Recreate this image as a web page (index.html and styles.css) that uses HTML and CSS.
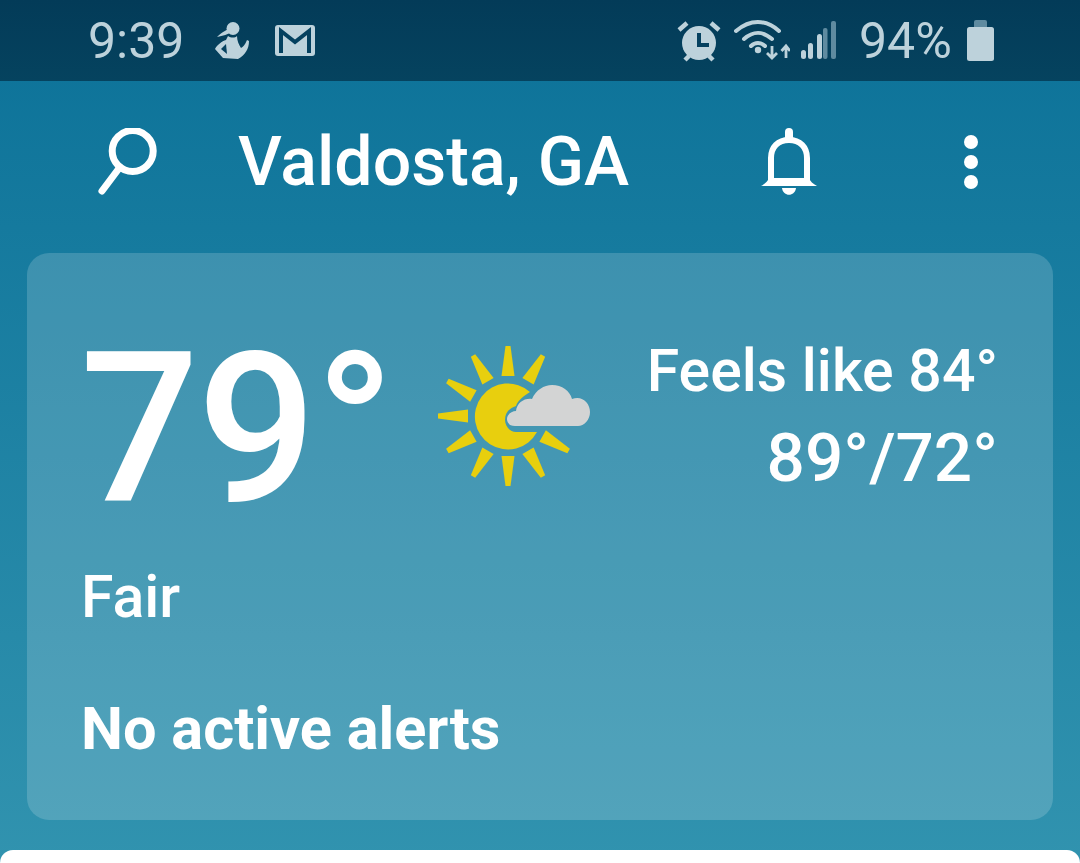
FILE: index.html
```html
<!DOCTYPE html>
<html lang="en">
<head>
<meta charset="utf-8">
<title>Valdosta, GA</title>
<link rel="stylesheet" href="styles.css">
</head>
<body>
<div class="status">
  <div class="status-left">
    <span class="clock">9:39</span>
    <svg class="i-person" viewBox="0 0 36 42"><circle cx="19" cy="8.500" r="6.500"/><path d="M17 8 C12 10 8 12 3 17 C9 16 14 14 18 12Z"/><path d="M14 16 C17 18 21 18 23 16 C23 21 25 25 27 28 C29 27 31 25 33 20 L35 21 C35 29 31 35 24 39 L9 38 L1 29 C3 25 8 21 12 20Z"/><path class="cut" d="M12 24 L7 29 L13 34 Z"/></svg>
    <svg class="i-mail" viewBox="0 0 40 31"><rect width="40" height="31" rx="3"/><path class="cut-stroke" d="M6 28 V6 L20 17 L34 6 V28"/></svg>
  </div>
  <div class="status-right">
    <svg class="i-alarm" viewBox="0 0 44 44"><path class="bar" d="M2 11 L10 4 M42 11 L34 4 M8 41 L12 37 M36 41 L32 37"/><circle cx="22" cy="24" r="17"/><path class="cut-stroke" d="M22 14 V26 H32"/></svg>
    <svg class="i-wifi" viewBox="0 0 56 44"><path class="arc" d="M2 12 C16 0 32 0 45 12 M10 20 C19 12 29 12 38 20 M17 27 C21 23 27 23 31 27"/><circle cx="24" cy="31" r="3.200"/><path class="arrow" d="M38 27 V39 M33 34 L38 39 L43 34 M52 39 V27 M47.500 32 L52 27 L56 32"/></svg>
    <svg class="i-signal" viewBox="0 0 36 44"><rect x="1" y="31" width="5" height="9" rx="2.500"/><rect x="8" y="24" width="5" height="16" rx="2.500"/><rect x="17" y="15" width="5" height="25" rx="2.500"/><rect class="dim" x="23" y="9" width="4.500" height="31" rx="2"/><rect class="dim" x="31" y="2" width="5" height="38" rx="2"/></svg>
    <span class="battery-text">94%</span>
    <svg class="i-battery" viewBox="0 0 27 41"><rect class="dim" x="7" y="0" width="13" height="9" rx="2"/><rect y="7" width="27" height="34" rx="2.500"/></svg>
  </div>
</div>

<header class="topbar">
  <svg class="i-search" viewBox="0 0 62 68"><circle cx="36.700" cy="23" r="20.500"/><path d="M24 39 L6 63"/></svg>
  <h1 class="city">Valdosta, GA</h1>
  <svg class="i-bell" viewBox="0 0 56 68"><path class="bell-line" d="M10 54 V30 C10 19 17 12 28 12 C39 12 46 19 46 30 V54"/><path class="bell-fill" d="M0 58 C4 56 7 53 8 50 H48 C49 53 52 56 56 58Z"/><rect class="bell-fill" x="24" y="0" width="8" height="14" rx="4"/><path class="bell-fill" d="M21 60 H35 C34 69 22 69 21 60Z"/></svg>
  <div class="kebab"><span></span><span></span><span></span></div>
</header>

<section class="card">
  <div class="now">
    <div class="temp">79°</div>
    <svg class="i-sun" viewBox="0 0 160 150">
      <g class="rays" transform="translate(72 76)">
        <path d="M-6.500 -40 L-2.500 -70 H2.500 L6.500 -40Z"/>
        <path d="M-6.500 -40 L-2.500 -70 H2.500 L6.500 -40Z" transform="rotate(30)"/>
        <path d="M-6.500 -40 L-2.500 -70 H2.500 L6.500 -40Z" transform="rotate(120)"/>
        <path d="M-6.500 -40 L-2.500 -70 H2.500 L6.500 -40Z" transform="rotate(150)"/>
        <path d="M-6.500 -40 L-2.500 -70 H2.500 L6.500 -40Z" transform="rotate(180)"/>
        <path d="M-6.500 -40 L-2.500 -70 H2.500 L6.500 -40Z" transform="rotate(210)"/>
        <path d="M-6.500 -40 L-2.500 -70 H2.500 L6.500 -40Z" transform="rotate(240)"/>
        <path d="M-6.500 -40 L-2.500 -70 H2.500 L6.500 -40Z" transform="rotate(270)"/>
        <path d="M-6.500 -40 L-2.500 -70 H2.500 L6.500 -40Z" transform="rotate(300)"/>
        <path d="M-6.500 -40 L-2.500 -70 H2.500 L6.500 -40Z" transform="rotate(330)"/>
        <path d="M22 -24 A33 33 0 1 0 29 16 H8 C2 16 -3 10 -3 4 C-3 -4 2 -8 8 -10 C10 -16 16 -20 22 -24Z"/>
      </g>
      <path class="cloud" d="M79 86 C74 86 71 83 71 79 C71 74 76 71 80 71 C81 63 88 58 96 59 C100 50 108 45 116 45 C126 45 134 51 136 59 C146 55 154 63 154 72 C154 80 148 86 142 86Z"/>
    </svg>
    <div class="feels">
      <div class="feels-like">Feels like 84°</div>
      <div class="range">89°/72°</div>
    </div>
  </div>
  <div class="cond">Fair</div>
  <div class="alerts">No active alerts</div>
</section>

<div class="sheet"></div>
</body>
</html>
```

FILE: styles.css
```css
* { box-sizing: border-box; }
html, body { margin: 0; height: 100%; }
body {
  width: 1080px;
  height: 863px;
  overflow: hidden;
  display: flex;
  flex-direction: column;
  font-family: Roboto, "Liberation Sans", sans-serif;
  color: #fff;
  background: linear-gradient(180deg, #0b7198 0%, #3193af 100%);
}

.status {
  height: 81px;
  flex: none;
  display: flex;
  justify-content: space-between;
  align-items: center;
  padding: 0 86px 0 88px;
  background: linear-gradient(180deg, #033b58, #05435f);
  color: #bdd2db;
  font-size: 50px;
  line-height: 81px;
}
.status svg { display: block; fill: #bdd2db; }
.status-left, .status-right { display: flex; align-items: center; }
.clock { width: 96px; margin-top: 2px; }
.i-person { width: 36px; height: 42px; margin-left: 30px; }
.i-mail { width: 40px; height: 31px; margin-left: 25px; }
.cut { fill: #05415f; }
.cut-stroke { fill: none; stroke: #05415f; stroke-width: 4; }
.i-alarm { width: 44px; height: 44px; }
.bar { fill: none; stroke: #bdd2db; stroke-width: 4.500; }
.i-wifi { width: 56px; height: 44px; margin-left: 13px; }
.arc { fill: none; stroke: #bdd2db; stroke-width: 4; stroke-linecap: round; }
.arrow { fill: none; stroke: #bdd2db; stroke-width: 2.800; }
.i-signal { width: 36px; height: 44px; margin-left: 10px; }
.status .dim { fill: #5f8ba0; }
.battery-text { margin-left: 23px; margin-top: 2px; width: 92px; }
.i-battery { width: 27px; height: 41px; margin-left: 16px; }

.topbar {
  height: 172px;
  flex: none;
  display: flex;
  align-items: center;
  padding: 0 0 10px 96px;
}
.i-search { width: 62px; height: 68px; flex: none; }
.i-search circle, .i-search path { fill: none; stroke: #fff; stroke-width: 7; stroke-linecap: round; }
.city {
  margin: 0 0 0 80px;
  width: 523px;
  font-size: 68px;
  font-weight: 500;
  line-height: 80px;
  white-space: nowrap;
}
.i-bell { width: 56px; height: 68px; flex: none; }
.bell-line { fill: none; stroke: #fff; stroke-width: 6; }
.bell-fill { fill: #fff; }
.kebab {
  display: flex;
  flex-direction: column;
  gap: 6px;
  margin-left: 147px;
}
.kebab span { width: 14px; height: 14px; border-radius: 50%; background: #fff; }

.card {
  flex: none;
  height: 567px;
  margin: 0 27px;
  padding: 0 55px 0 54px;
  border-radius: 22px;
  background: rgba(255, 255, 255, 0.17);
}
.now { display: flex; height: 272px; }
.temp {
  font-size: 210px;
  font-weight: 500;
  line-height: 240px;
  margin: 56px 0 0 -1px;
  letter-spacing: -2px;
  width: 356px;
  height: 240px;
  white-space: nowrap;
}
.i-sun { width: 160px; height: 150px; flex: none; margin-top: 87px; }
.feels {
  flex: 1;
  text-align: right;
  margin-top: 74px;
  font-weight: 500;
}
.feels-like { font-size: 59px; line-height: 87px; white-space: nowrap; }
.range { font-size: 67.500px; line-height: 87px; white-space: nowrap; }
.i-sun .rays { fill: #e8cf0e; }
.cloud { fill: #d3d4d4; }
.cond {
  font-size: 59px;
  font-weight: 500;
  line-height: 70px;
  margin-top: 37px;
}
.alerts {
  font-size: 59.500px;
  font-weight: 700;
  line-height: 70px;
  margin-top: 62px;
}
.sheet {
  flex: none;
  height: 13px;
  margin-top: 30px;
  background: #fff;
  border-radius: 26px 26px 0 0;
}
```
